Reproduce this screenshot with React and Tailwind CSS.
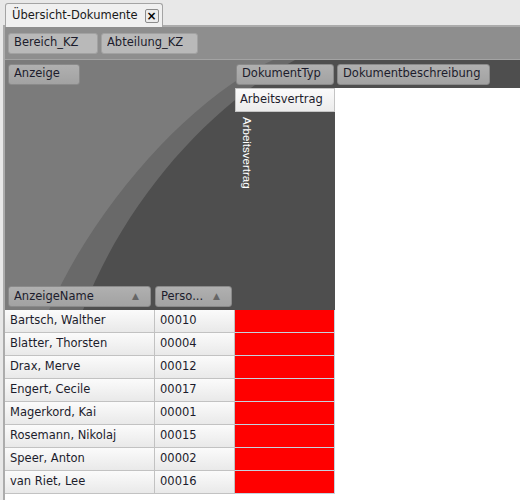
const FONT = "font-['DejaVu_Sans',sans-serif]";

const ROWS = [
  { name: "Bartsch, Walther", nr: "00010" },
  { name: "Blatter, Thorsten", nr: "00004" },
  { name: "Drax, Merve", nr: "00012" },
  { name: "Engert, Cecile", nr: "00017" },
  { name: "Magerkord, Kai", nr: "00001" },
  { name: "Rosemann, Nikolaj", nr: "00015" },
  { name: "Speer, Anton", nr: "00002" },
  { name: "van Riet, Lee", nr: "00016" },
];

function FieldButton({ label, width, light, sort }) {
  return (
    <div
      className={`flex h-[21px] shrink-0 items-center justify-between rounded-[3px] border px-[5px] text-[11.5px] text-[#1c1c2c] ${width} ${
        light
          ? "border-[#a2a2a2] bg-[#b9b9b9]"
          : "border-[#8a8a8a] bg-gradient-to-b from-[#b0b0b0] to-[#a2a2a2]"
      }`}
    >
      <span className="truncate">{label}</span>
      {sort ? <span className="pr-[6px] text-[9px] text-[#666]">▲</span> : null}
    </div>
  );
}

function Swoosh() {
  return (
    <svg className="absolute left-0 top-0" width="515" height="250" viewBox="0 0 515 250">
      <rect width="515" height="250" fill="#4e4e4e" />
      <path d="M0 0 L290 0 C205 45 120 140 78 250 L0 250 Z" fill="#696969" />
      <path d="M0 0 L268 0 C185 38 90 145 44 250 L0 250 Z" fill="#7b7b7b" />
    </svg>
  );
}

export default function App() {
  return (
    <div className={`flex h-[500px] w-[520px] flex-col overflow-hidden bg-[#e8e8e8] ${FONT}`}>
      {/* tab strip */}
      <div className="flex h-[25px] shrink-0 items-end pl-[5px]">
        <div className="relative z-10 -mb-[2px] flex h-[24px] w-[158px] items-center gap-[7px] rounded-t-[3px] border border-b-0 border-[#a4a4a4] bg-[#f0f0f0] pl-[6px] text-[11.5px] text-[#1a1a1a]">
          <span>Übersicht-Dokumente</span>
          <span className="flex h-[14px] w-[14px] items-center justify-center rounded-[2px] border border-[#8c8c8c] bg-[#ececec] text-[12px] font-bold leading-none text-black">
            ×
          </span>
        </div>
      </div>

      {/* frame */}
      <div className="ml-[3px] flex flex-1 flex-col border-l-2 border-t-2 border-[#acacac] bg-white">
        {/* filter row */}
        <div className="flex h-[33px] shrink-0 items-center gap-[3px] border-b border-[#a3a3a3] bg-[#8e8e8e] pl-[3px]">
          <FieldButton label="Bereich_KZ" width="w-[90px]" light />
          <FieldButton label="Abteilung_KZ" width="w-[97px]" light />
        </div>

        <div className="relative">
          <Swoosh />
          <div className="relative grid grid-cols-[230px_100px_1fr] grid-rows-[28px_24px_171px_27px_184px]">
            {/* row fields */}
            <div className="flex items-center pl-[3px]">
              <FieldButton label="Anzeige" width="w-[72px]" />
            </div>
            {/* column fields */}
            <div className="col-span-2 flex items-center gap-[3px] pl-px">
              <FieldButton label="DokumentTyp" width="w-[98px]" />
              <FieldButton label="Dokumentbeschreibung" width="w-[153px]" />
            </div>

            {/* column header */}
            <div className="col-start-2 row-start-2 flex items-center border border-[#c4c4c4] bg-gradient-to-b from-[#fafafa] to-[#ececec] pl-[4px] text-[11.5px] text-[#1c1c2c]">
              Arbeitsvertrag
            </div>
            <div className="col-start-3 row-span-5 row-start-2 bg-white" />

            <div className="col-start-2 row-span-2 row-start-3 bg-[#4e4e4e] pl-[6px] pt-[5px]">
              <span className="font-['Liberation_Sans',sans-serif] text-[11.5px] leading-[12px] text-white [writing-mode:vertical-rl]">
                Arbeitsvertrag
              </span>
            </div>

            {/* row headers */}
            <div className="col-start-1 row-start-4 flex items-center gap-[4px] pl-[3px]">
              <FieldButton label="AnzeigeName" width="w-[143px]" sort />
              <FieldButton label="Perso..." width="w-[77px]" sort />
            </div>

            {/* data */}
            <div className="col-start-1 row-start-5 flex flex-col">
              {ROWS.map((r) => (
                <div key={r.nr} className="flex h-[23px] text-[11.5px] text-[#1c1c2c]">
                  <div className="flex w-[150px] items-center border-b border-r border-[#c2c2c2] bg-gradient-to-b from-[#fbfbfb] to-[#e9e9e9] pl-[5px]">
                    {r.name}
                  </div>
                  <div className="flex w-[80px] items-center border-b border-r border-[#c2c2c2] bg-gradient-to-b from-[#fbfbfb] to-[#e9e9e9] pl-[5px]">
                    {r.nr}
                  </div>
                </div>
              ))}
            </div>
            <div className="col-start-2 row-start-5 flex flex-col">
              {ROWS.map((r) => (
                <div key={r.nr} className="h-[23px] border-b border-r border-[#c5d2de] bg-[#ff0000]" />
              ))}
            </div>
          </div>
        </div>
      </div>
    </div>
  );
}
